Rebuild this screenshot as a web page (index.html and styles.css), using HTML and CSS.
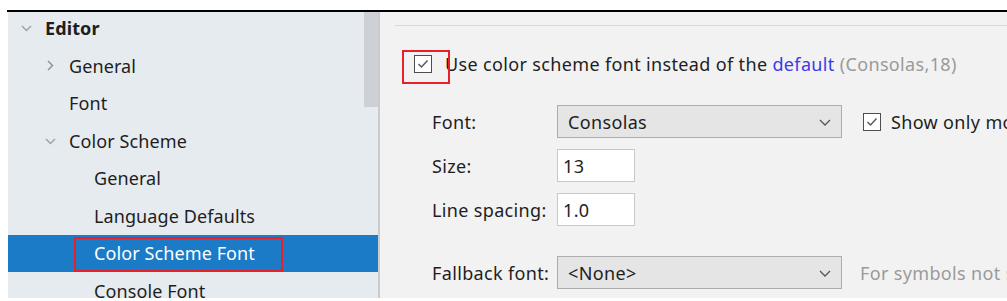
FILE: index.html
```html
<!DOCTYPE html>
<html>
<head>
<meta charset="utf-8">
<link rel="stylesheet" href="styles.css">
</head>
<body>
<div class="frame">
  <div class="sidebar">
    <div class="tree">
      <div class="row lvl1 bold"><span class="chev"><svg width="11" height="10" viewBox="0 0 11 10"><path d="M1 3 L5.5 7.5 L10 3" fill="none" stroke="#9da1a5" stroke-width="1.4"/></svg></span>Editor</div>
      <div class="row lvl2"><span class="chev"><svg width="11" height="11" viewBox="0 0 11 11"><path d="M3 1 L7.5 5.5 L3 10" fill="none" stroke="#8a8e92" stroke-width="1.4"/></svg></span>General</div>
      <div class="row lvl2"><span class="chev"></span>Font</div>
      <div class="row lvl2"><span class="chev"><svg width="11" height="10" viewBox="0 0 11 10"><path d="M1 3 L5.5 7.5 L10 3" fill="none" stroke="#9da1a5" stroke-width="1.4"/></svg></span>Color Scheme</div>
      <div class="row lvl3">General</div>
      <div class="row lvl3">Language Defaults</div>
      <div class="row lvl3 selected"><span class="mark-tree"></span>Color Scheme Font</div>
      <div class="row lvl3">Console Font</div>
    </div>
    <div class="thumb"></div>
  </div>
  <div class="panel">
    <div class="sep"></div>
    <div class="optrow">
      <span class="mark-check"></span>
      <span class="cb"><svg width="14" height="14" viewBox="0 0 14 14"><path d="M2.5 7 L5.5 10 L11.5 3.5" fill="none" stroke="#5a5a5a" stroke-width="1.5"/></svg></span>
      <span class="opttext">Use color scheme font instead of the <span class="link">default</span> <span class="muted">(Consolas,18)</span></span>
    </div>
    <div class="frow first">
      <span class="lbl">Font:</span>
      <div class="combo"><span>Consolas</span><svg width="14" height="10" viewBox="0 0 14 10"><path d="M2 3 L7 8 L12 3" fill="none" stroke="#555" stroke-width="1.3"/></svg></div>
      <span class="cb cb2"><svg width="14" height="14" viewBox="0 0 14 14"><path d="M2.5 7 L5.5 10 L11.5 3.5" fill="none" stroke="#5a5a5a" stroke-width="1.5"/></svg></span>
      <span class="side">Show only monospaced fonts</span>
    </div>
    <div class="frow gap">
      <span class="lbl">Size:</span>
      <div class="input">13</div>
    </div>
    <div class="frow gap">
      <span class="lbl">Line spacing:</span>
      <div class="input">1.0</div>
    </div>
    <div class="frow biggap">
      <span class="lbl">Fallback font:</span>
      <div class="combo"><span>&lt;None&gt;</span><svg width="14" height="10" viewBox="0 0 14 10"><path d="M2 3 L7 8 L12 3" fill="none" stroke="#555" stroke-width="1.3"/></svg></div>
      <span class="hint">For symbols not supported by the main font</span>
    </div>
  </div>
</div>
</body>
</html>
```
FILE: styles.css
```css
html, body {
  margin: 0;
  padding: 0;
  background: #ffffff;
}
body {
  font-family: "Noto Sans", "Liberation Sans", sans-serif;
  font-size: 18px;
  color: #1e1e1e;
}
.frame {
  margin: 10px 0 0 7px;
  border-top: 2px solid #000;
  height: 286px;
  display: flex;
  padding-left: 1px;
  overflow: hidden;
}
.sidebar {
  width: 370px;
  flex: none;
  background: #e6ebf0;
  border-right: 2px solid #c8ccd1;
  position: relative;
  overflow: hidden;
}
.tree {
  margin-top: -2.5px;
  letter-spacing: 0.1px;
}
.row {
  height: 37.5px;
  display: flex;
  align-items: center;
  white-space: nowrap;
  position: relative;
}
.row.bold {
  font-weight: 700;
}
.chev {
  width: 11px;
  height: 11px;
  display: inline-flex;
  align-items: center;
  margin-right: 13px;
}
.lvl1 {
  padding-left: 13px;
}
.lvl2 {
  padding-left: 37px;
}
.lvl3 {
  padding-left: 86px;
}
.selected {
  background: #1b7bc7;
  color: #ffffff;
}
.mark-tree {
  position: absolute;
  left: 66px;
  top: 2px;
  width: 205px;
  height: 31px;
  border: 2px solid #e8202a;
}
.thumb {
  position: absolute;
  right: 0;
  top: 0;
  width: 14px;
  height: 95px;
  background: #cdd1d6;
}
.panel {
  flex: 1;
  background: #f2f2f2;
  padding-left: 15px;
  overflow: hidden;
  white-space: nowrap;
  letter-spacing: 0.35px;
}
.sep {
  margin-top: 13px;
  height: 1px;
  background: #d8d8d8;
}
.optrow {
  margin-top: 29px;
  height: 18px;
  display: flex;
  align-items: center;
  padding-left: 19px;
  position: relative;
}
.mark-check {
  position: absolute;
  left: 7px;
  top: -5px;
  width: 44px;
  height: 30px;
  border: 2px solid #e8202a;
}
.cb {
  width: 16px;
  height: 16px;
  border: 1.5px solid #4e4e4e;
  background: #ffffff;
  display: inline-flex;
  align-items: center;
  justify-content: center;
  flex: none;
}
.opttext {
  margin-left: 13px;
}
.link {
  color: #3b3bea;
}
.muted {
  color: #9a9a9a;
}
.frow {
  display: flex;
  align-items: center;
  height: 33px;
  padding-left: 37px;
}
.frow.first {
  margin-top: 32px;
}
.frow.gap {
  margin-top: 11px;
}
.frow.biggap {
  margin-top: 30px;
}
.lbl {
  width: 125px;
  flex: none;
}
.combo {
  width: 285px;
  height: 33px;
  box-sizing: border-box;
  border: 1px solid #adadad;
  background: #e5e5e5;
  display: flex;
  align-items: center;
  justify-content: space-between;
  padding: 0 9px 0 10px;
  flex: none;
}
.input {
  width: 78px;
  height: 33px;
  box-sizing: border-box;
  border: 1px solid #c9c9c9;
  background: #ffffff;
  display: flex;
  align-items: center;
  padding-left: 5px;
}
.cb2 {
  margin-left: 21px;
}
.side {
  margin-left: 10px;
}
.hint {
  margin-left: 18px;
  color: #9a9a9a;
}
```
